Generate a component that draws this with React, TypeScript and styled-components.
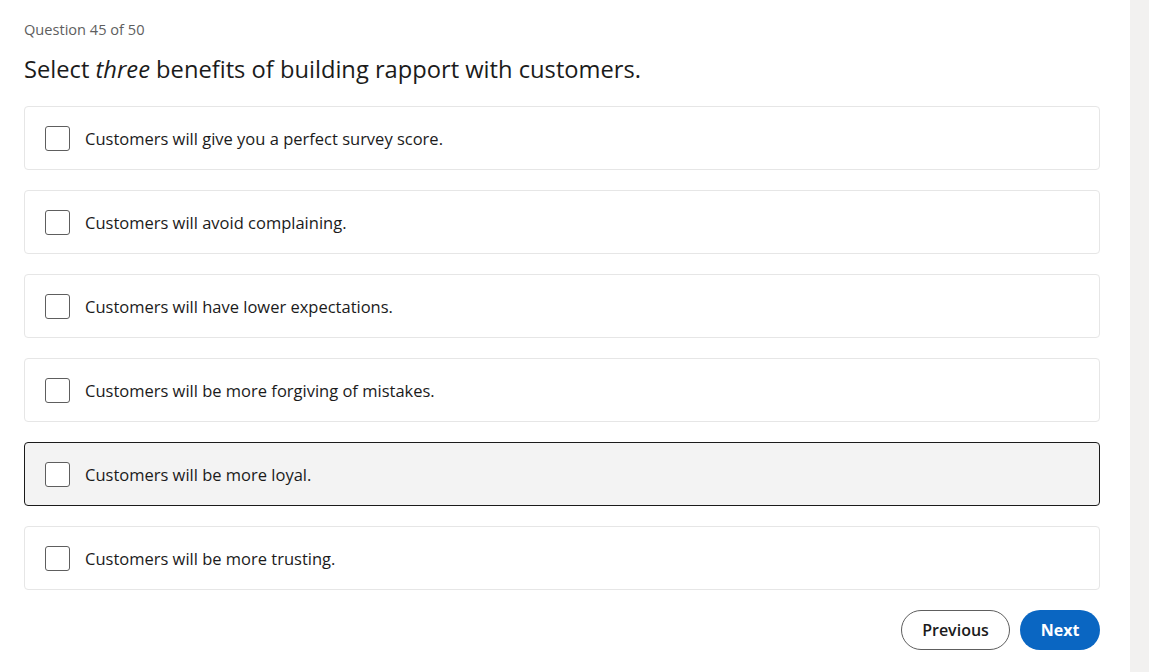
import styled, { createGlobalStyle } from "styled-components";

const GlobalStyle = createGlobalStyle`
  body {
    margin: 0;
    background: #ffffff;
    font-family: "Open Sans", "Noto Sans", "Liberation Sans", sans-serif;
    color: #1b1b1b;
  }
`;

const options = [
  "Customers will give you a perfect survey score.",
  "Customers will avoid complaining.",
  "Customers will have lower expectations.",
  "Customers will be more forgiving of mistakes.",
  "Customers will be more loyal.",
  "Customers will be more trusting.",
];

const App = () => {
  return (
    <Page>
      <GlobalStyle />
      <Main>
        <Counter>Question 45 of 50</Counter>
        <Title>
          Select <em>three</em> benefits of building rapport with customers.
        </Title>
        <List>
          {options.map((text, i) => (
            <Option key={text} $hover={i === 4}>
              <Box />
              <Label>{text}</Label>
            </Option>
          ))}
        </List>
        <Footer>
          <OutlineButton>Previous</OutlineButton>
          <PrimaryButton>Next</PrimaryButton>
        </Footer>
      </Main>
      <Rail />
    </Page>
  );
};

export default App;

const Page = styled.div`
  display: flex;
  height: 672px;
  overflow: hidden;
`;

const Main = styled.main`
  flex: 1;
  padding: 19px 30px 0 24px;
`;

const Rail = styled.div`
  width: 19px;
  background: #f2f1f0;
`;

const Counter = styled.div`
  font-size: 14.6px;
  color: #5e5e5e;
  line-height: 20px;
`;

const Title = styled.h1`
  margin: 14px 0 21px;
  font-size: 23.7px;
  font-weight: 400;
  line-height: 32px;
  color: #1b1b1b;
`;

const List = styled.div`
  display: flex;
  flex-direction: column;
  gap: 20px;
`;

const Option = styled.label<{ $hover?: boolean }>`
  display: flex;
  align-items: center;
  gap: 15px;
  height: 64px;
  box-sizing: border-box;
  padding: 0 20px;
  border-radius: 4px;
  border: 1px solid ${(p) => (p.$hover ? "#1b1b1b" : "#e6e6e6")};
  background: ${(p) => (p.$hover ? "#f3f3f3" : "#ffffff")};
  cursor: pointer;
`;

const Box = styled.span`
  width: 25px;
  height: 25px;
  box-sizing: border-box;
  border: 1.5px solid #5e5e5e;
  border-radius: 3px;
  background: #ffffff;
  flex-shrink: 0;
`;

const Label = styled.span`
  font-size: 16.5px;
  color: #1b1b1b;
`;

const Footer = styled.div`
  display: flex;
  justify-content: flex-end;
  gap: 10px;
  margin-top: 20px;
`;

const OutlineButton = styled.button`
  height: 40px;
  width: 109px;
  border-radius: 20px;
  border: 1px solid #5e5e5e;
  background: #ffffff;
  color: #1b1b1b;
  font-family: inherit;
  font-size: 16px;
  font-weight: 600;
`;

const PrimaryButton = styled.button`
  height: 40px;
  width: 80px;
  border-radius: 20px;
  border: none;
  background: #0a66c2;
  color: #ffffff;
  font-family: inherit;
  font-size: 16px;
  font-weight: 700;
`;
